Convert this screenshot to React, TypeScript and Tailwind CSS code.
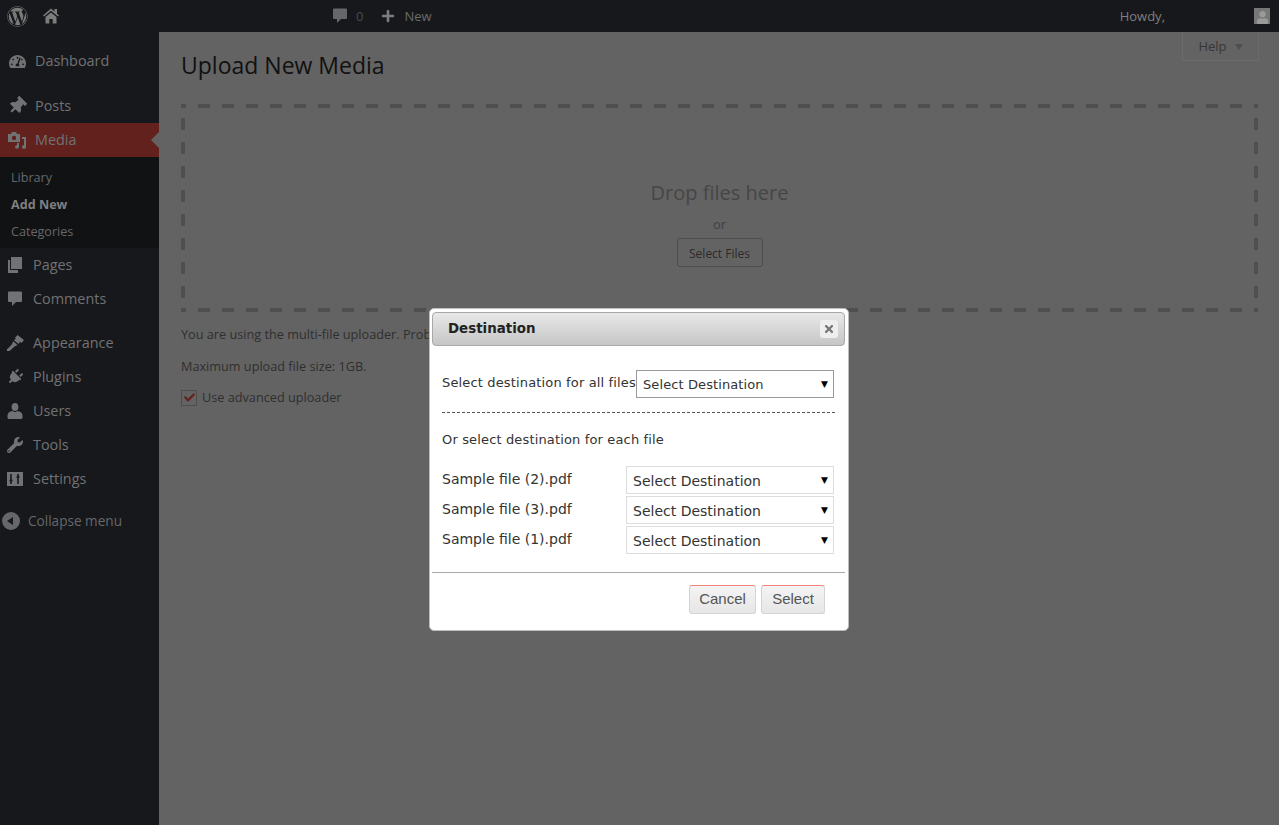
import React from "react";
import { FaWordpress, FaThumbtack, FaPlug, FaUser, FaWrench, FaTachometerAlt, FaTimes, FaCheck, FaPlus } from "react-icons/fa";

const HomeIcon = () => (
  <svg viewBox="0 0 16 16" className="w-[16px] h-[16px] ml-[15px] text-[#7d7d7d]" fill="currentColor">
    <path fillRule="evenodd" d="M8 0.5 11.5 3.5V1H14V5.7L16 7.5 15 8.5 8 2.8 1 8.5 0 7.5zM2.5 9 8 4.5 13.5 9V15.5H9.7V11H6.3V15.5H2.5z" />
  </svg>
);
const BubbleIcon = ({ cls }: { cls: string }) => (
  <svg viewBox="0 0 14 16" className={cls} fill="currentColor">
    <path d="M1 0.5H13A1 1 0 0 1 14 1.5V10A1 1 0 0 1 13 11H8L4 15V11H1A1 1 0 0 1 0 10V1.5A1 1 0 0 1 1 0.5z" />
  </svg>
);
const PagesIcon = () => (
  <svg viewBox="0 0 14 16" className="w-[14px] h-[16px]" fill="currentColor">
    <path d="M3 0H14V12H3z" />
    <path d="M0 3H2V13H10V16H0z" />
  </svg>
);
const BrushIcon = () => (
  <svg viewBox="0 0 18 16" className="w-[18px] h-[16px]" fill="currentColor">
    <path d="M11.5 0 18 5 15.5 8 14 6.8 12.5 9 8 5.3 9.8 3.5 9 2.8z" />
    <path d="M7.2 6.2 11.5 10 8.5 11.5 3 16.5 1 16 0.8 14.5 5.8 9.5z" />
  </svg>
);
const UserIcon = () => (
  <svg viewBox="0 0 16 16" className="w-[16px] h-[16px]" fill="currentColor">
    <ellipse cx="8" cy="4" rx="3.4" ry="4" />
    <path d="M5.5 8C2.5 8.6 0.5 10 0.5 12.5V14.5C0.5 15.4 1.2 16 2 16H14C14.8 16 15.5 15.4 15.5 14.5V12.5C15.5 10 13.5 8.6 10.5 8 9 9.2 7 9.2 5.5 8z" />
  </svg>
);
const MediaIcon = () => (
  <svg viewBox="0 0 18 18" className="w-[18px] h-[18px]" fill="currentColor">
    <path d="M0 3h3l1-2h4l1 2h3v8H0z" />
    <circle cx="6" cy="7" r="2.2" fill="#62211d" />
    <path d="M14 6h4v10a2 2 0 1 1-2-2V8h-2zM9 12h2v4a2 1.8 0 1 1-2-1.8z" />
  </svg>
);
const SettingsIcon = () => (
  <svg viewBox="0 0 16 14" className="w-[16px] h-[14px]">
    <rect width="16" height="14" fill="currentColor" />
    <path d="M4 2v10M11 2v10M2.5 8.5h3M9.5 5h3" stroke="#17181b" strokeWidth="1.6" />
  </svg>
);
const CollapseIcon = () => (
  <svg viewBox="0 0 18 18" className="w-[18px] h-[18px]" fill="currentColor">
    <path fillRule="evenodd" d="M9 0a9 9 0 1 1 0 18A9 9 0 0 1 9 0zM11 5 5 9l6 4z" />
  </svg>
);

function Item({ icon, label, wide, cls = "" }: { icon: React.ReactNode; label: string; wide?: boolean; cls?: string }) {
  return (
    <div className={`h-[34px] flex items-center relative text-[14.4px] text-[#717273] ${cls}`}>
      <span className={`flex justify-center items-center ${wide ? "w-[35px] pr-[1px]" : "w-[33px] pr-[3px]"}`}>{icon}</span>
      <span className="leading-[20px] h-[20px] -mt-[1px]">{label}</span>
    </div>
  );
}

function Sidebar() {
  return (
    <aside className="w-[159px] shrink-0 bg-[#17181b] pt-[12px] flex flex-col">
      <Item wide label="Dashboard" icon={<FaTachometerAlt size={17} />} />
      <div className="h-[11px]" />
      <Item wide label="Posts" icon={<FaThumbtack size={18} className="rotate-45" />} />
      <Item wide label="Media" cls="bg-[#62211d]" icon={<MediaIcon />} />
      <div className="relative h-0">
        <span className="absolute right-0 top-[-25px] border-y-[8px] border-r-[8px] border-y-transparent border-r-[#636363]" />
      </div>
      <div className="bg-[#111214] h-[91px] pt-[8px] pl-[11px] text-[12.6px] text-[#66676a]">
        <div className="h-[27px] flex items-center">Library</div>
        <div className="h-[27px] flex items-center font-bold text-[#7f7f7f]">Add New</div>
        <div className="h-[27px] flex items-center">Categories</div>
      </div>
      <Item label="Pages" icon={<PagesIcon />} />
      <Item label="Comments" icon={<BubbleIcon cls="w-[14px] h-[16px]" />} />
      <div className="h-[10px]" />
      <Item label="Appearance" icon={<BrushIcon />} />
      <Item label="Plugins" icon={<FaPlug size={16} className="rotate-45" />} />
      <Item label="Users" icon={<UserIcon />} />
      <Item label="Tools" icon={<FaWrench size={16} />} />
      <Item label="Settings" icon={<SettingsIcon />} />
      <div className="h-[34px] mt-[8px] flex items-center pl-[2px] gap-[8px] text-[13.6px] text-[#66676a]">
        <CollapseIcon />
        Collapse menu
      </div>
    </aside>
  );
}

function TopBar() {
  return (
    <header className="h-[32px] bg-[#17181b] flex items-center text-[#6a6b6c] text-[13px] shrink-0">
      <FaWordpress size={21} className="ml-[7px] text-[#7a7a7a]" />
      <HomeIcon />
      <BubbleIcon cls="ml-[274px] w-[14px] h-[16px] text-[#66676a]" />
      <span className="ml-[9px] text-[#4a4b4d] pt-[1px]">0</span>
      <FaPlus size={14} className="ml-[18px] text-[#7d7d7d]" />
      <span className="ml-[9px] pt-[1px]">New</span>
      <span className="ml-auto text-[#7f7f7f] pt-[1px]">Howdy,</span>
      <span className="ml-[89px] mr-[9px] w-[16px] h-[16px] bg-[#777] overflow-hidden flex items-end justify-center">
        <FaUser size={13} className="text-[#9a9a9a]" />
      </span>
    </header>
  );
}

function Dashes() {
  const d = { stroke: "#4f4f4f", strokeWidth: 4, strokeDasharray: "12 12" };
  return (
    <svg className="absolute inset-0" width="1077" height="208">
      <line x1="0" y1="2" x2="1077" y2="2" {...d} strokeDashoffset="7" />
      <line x1="0" y1="206" x2="1077" y2="206" {...d} strokeDashoffset="7" />
      <line x1="2" y1="0" x2="2" y2="208" {...d} strokeDashoffset="10" />
      <line x1="1075" y1="0" x2="1075" y2="208" {...d} strokeDashoffset="10" />
    </svg>
  );
}

function Main() {
  return (
    <main className="flex-1 bg-[#636363] pl-[22px] pr-[21px] relative text-[12.7px] text-[#2f2f2f]">
      <div className="absolute right-[20px] top-0 w-[77px] h-[29px] pt-[2px] border border-t-0 border-[#6b6b6b] flex items-center justify-center gap-[8px] text-[13px] text-[#363636]">
        Help
        <span className="border-x-[4.5px] border-t-[6px] border-x-transparent border-t-[#4f4f4f]" />
      </div>
      <h1 className="text-[23px] leading-[31px] text-[#111] pt-[18px] h-[72px]">Upload New Media</h1>
      <div className="relative h-[208px] flex flex-col items-center">
        <Dashes />
        <div className="text-[20px] leading-[28px] text-[#464646] mt-[75px]">Drop files here</div>
        <div className="text-[13px] text-[#404040] leading-[18px] mt-[8px]">or</div>
        <div className="mt-[5px] w-[86px] h-[29px] pt-[2px] border border-[#4d4d4d] rounded-[3px] text-[12px] text-[#2a2a2a] flex items-center justify-center">Select Files</div>
      </div>
      <p className="mt-[13px] leading-[18px]">You are using the multi-file uploader. Problems? Try the browser uploader instead.</p>
      <p className="mt-[14px] leading-[18px]">Maximum upload file size: 1GB.</p>
      <div className="mt-[13px] flex items-center gap-[5px]">
        <span className="w-[16px] h-[16px] border border-[#4d4d4d] flex items-center justify-center text-[#62211d]"><FaCheck size={11} /></span>
        Use advanced uploader
      </div>
    </main>
  );
}

function DestSelect({ w, border, cls }: { w: string; border: string; cls: string }) {
  return (
    <div className={`${w} ${border} ${cls} h-[28px] pl-[6px] border bg-white flex items-center justify-between pr-[5px]`}>
      <span className="pt-[2px]">Select Destination</span>
      <span className="text-[9px] text-black leading-[12px]">▼</span>
    </div>
  );
}

function Modal() {
  const files = ["Sample file (2).pdf", "Sample file (3).pdf", "Sample file (1).pdf"];
  return (
    <div className="absolute left-[429px] top-[308px] w-[420px] h-[323px] bg-white border border-[#bdbdbd] rounded-[5px] pl-[2px] pr-[3px] pt-[3px] font-['DejaVu_Sans',sans-serif] text-[#333]">
      <div className="h-[34px] rounded-[4px] border border-[#a8a8a8] bg-gradient-to-b from-[#e8e8e8] to-[#c6c6c6] flex items-center justify-between pl-[15px] pr-[6px]">
        <span className="font-bold text-[13.4px] text-[#222] pt-[1px]">Destination</span>
        <span className="w-[18px] h-[18px] rounded-[3px] bg-[#eeeeee] flex items-center justify-center text-[#777]"><FaTimes size={12} /></span>
      </div>
      <div className="pl-[10px] pr-[10px]">
        <div className="mt-[24px] flex items-start text-[13px] tracking-[0.15px] h-[28px]">
          <span className="pt-[3px] w-[194px] shrink-0 whitespace-nowrap">Select destination for all files</span>
          <DestSelect w="w-[198px]" border="border-[#999]" cls="text-[13px] tracking-[0.1px]" />
        </div>
        <div className="mt-[14px] border-t border-dashed border-[#555]" />
        <div className="mt-[18px] text-[13px] tracking-[0.15px] leading-[18px]">Or select destination for each file</div>
        <div className="mt-[17px] flex flex-col gap-[2px]">
          {files.map((f) => (
            <div key={f} className="flex items-start h-[28px] text-[14px]">
              <span className="w-[184px] shrink-0 leading-[26px]">{f}</span>
              <DestSelect w="w-[208px]" border="border-[#ddd]" cls="text-[14px]" />
            </div>
          ))}
        </div>
      </div>
      <div className="mt-[18px] border-t border-[#aaa]" />
      <div className="mt-[12px] flex justify-end gap-[5px] pr-[20px] font-['Liberation_Sans',sans-serif] text-[15px] text-[#555]">
        <span className="w-[67px] h-[29px] rounded-[3px] border border-[#d4d4d4] border-t-[#f28378] bg-gradient-to-b from-[#f4f4f4] to-[#e6e6e6] flex items-center justify-center">Cancel</span>
        <span className="w-[64px] h-[29px] rounded-[3px] border border-[#d4d4d4] border-t-[#f28378] bg-gradient-to-b from-[#f4f4f4] to-[#e6e6e6] flex items-center justify-center">Select</span>
      </div>
    </div>
  );
}

export default function App() {
  return (
    <div className="relative h-[825px] overflow-hidden flex flex-col font-['Open_Sans',sans-serif] bg-[#636363]">
      <TopBar />
      <div className="flex flex-1 min-h-0">
        <Sidebar />
        <Main />
      </div>
      <Modal />
    </div>
  );
}
